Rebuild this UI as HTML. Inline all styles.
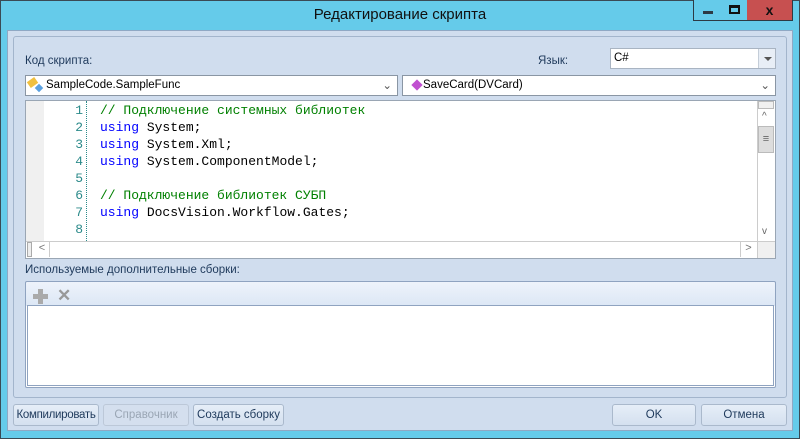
<!DOCTYPE html>
<html><head><meta charset="utf-8"><style>
*{box-sizing:border-box;margin:0;padding:0}
body{width:800px;height:439px;position:relative;overflow:hidden;background:#65cbea;font-family:"Liberation Sans",sans-serif;font-size:11.5px;color:#1e395b}
.a{position:absolute}
.win{left:0;top:0;width:800px;height:439px;border:1px solid #3a4a55;}
.client{left:7px;top:30px;width:786px;height:401px;background:#d0ddee;border:1px solid #8fa8c4}
.panel{left:13px;top:36px;width:774px;height:362px;border:1px solid #a3b5cc;border-radius:3px}
.box{background:#fff;border:1px solid #a9b4c2}
.btn{border:1px solid #aab9cc;border-radius:3px;background:linear-gradient(#e6eef8,#d4e0ef);text-align:center;line-height:20px;color:#1e395b;font-size:11.5px;white-space:nowrap}
.code{font-family:"Liberation Mono",monospace;font-size:13px;line-height:17px;white-space:pre;color:#000}
.k{color:#0000ff}.c{color:#008000}
.ln{font-family:"Liberation Mono",monospace;font-size:13px;line-height:17px;color:#2b8a8a;text-align:right;white-space:pre}
</style></head><body>
<div class="a win"></div>
<div class="a" style="left:0;top:6px;width:800px;text-align:center;font-size:15px;color:#111">Редактирование скрипта</div>
<div class="a" style="left:693px;top:0;width:30px;height:21px;border:1px solid #2d3a44;border-top:none;background:#65cbea"><div class="a" style="left:9px;top:11px;width:10px;height:3px;background:#2d3a44"></div></div>
<div class="a" style="left:722px;top:0;width:26px;height:21px;border:1px solid #2d3a44;border-top:none;border-left:none;background:#65cbea"><div class="a" style="left:7px;top:5px;width:11px;height:9px;border:2px solid #111;border-top-width:3px"></div></div>
<div class="a" style="left:747px;top:0;width:46px;height:21px;border:1px solid #2d3a44;border-top:none;border-left:none;background:#c75050;color:#111;font-weight:bold;font-size:14px;text-align:center;line-height:20px">x</div>
<div class="a client"></div>
<div class="a panel"></div>
<div class="a" style="left:25px;top:55px">Код скрипта:</div>
<div class="a" style="left:538px;top:55px">Язык:</div>
<div class="a box" style="left:610px;top:48px;width:166px;height:21px;padding:3px 3px;color:#000">C#</div>
<div class="a" style="left:758px;top:49px;width:17px;height:19px;background:#e8eef6;border-left:1px solid #c4cdd8"><div class="a" style="left:5px;top:8px;border:4px solid transparent;border-top:4px solid #555;border-bottom:none"></div></div>
<div class="a box" style="left:25px;top:75px;width:373px;height:21px;border-color:#8a96a4;padding:3px 0 0 20px;color:#000">SampleCode.SampleFunc<span class="a" style="right:5px;top:2px;color:#555">⌄</span></div>
<div class="a" style="left:28px;top:79px;width:9px;height:7px;background:#f0c040;transform:rotate(-35deg)"></div>
<div class="a" style="left:36px;top:85px;width:6px;height:6px;background:#5aa0e0;transform:rotate(45deg)"></div>
<div class="a box" style="left:402px;top:75px;width:374px;height:21px;border-color:#8a96a4;padding:3px 0 0 20px;color:#000">SaveCard(DVCard)<span class="a" style="right:5px;top:2px;color:#555">⌄</span></div>
<div class="a" style="left:413px;top:81px;width:8px;height:8px;background:#c050d0;transform:rotate(45deg)"></div>
<div class="a box" style="left:25px;top:100px;width:751px;height:159px;border-color:#9aa6b4"></div>
<div class="a" style="left:26px;top:101px;width:18px;height:140px;background:#f0f0f0"></div>
<div class="a ln" style="left:44px;top:102px;width:39px">1
2
3
4
5
6
7
8</div>
<div class="a" style="left:86px;top:101px;height:140px;border-left:1px dotted #2b8a8a"></div>
<div class="a code" style="left:100px;top:102px"><span class="c">// Подключение системных библиотек</span>
<span class="k">using</span> System;
<span class="k">using</span> System.Xml;
<span class="k">using</span> System.ComponentModel;

<span class="c">// Подключение библиотек СУБП</span>
<span class="k">using</span> DocsVision.Workflow.Gates;
</div>
<div class="a" style="left:757px;top:101px;width:18px;height:140px;background:#fff;border-left:1px solid #ccc"></div>
<div class="a" style="left:758px;top:101px;width:16px;height:8px;background:#f0f0f0;border:1px solid #bbb"></div>
<div class="a" style="left:762px;top:111px;font-size:10px;color:#666">^</div>
<div class="a" style="left:758px;top:126px;width:16px;height:27px;background:#ddd;border:1px solid #bbb;text-align:center;color:#666;font-size:11px;line-height:24px">≡</div>
<div class="a" style="left:762px;top:226px;font-size:10px;color:#666">v</div>
<div class="a" style="left:26px;top:241px;width:731px;height:17px;background:#fff;border-top:1px solid #ccc"></div>
<div class="a" style="left:27px;top:242px;width:5px;height:15px;background:#eee;border:1px solid #aaa"></div>
<div class="a" style="left:35px;top:242px;width:15px;height:15px;border-right:1px solid #ccc;color:#777;font-size:11px;text-align:center">&lt;</div>
<div class="a" style="left:740px;top:242px;width:16px;height:15px;border-left:1px solid #ccc;color:#777;font-size:11px;text-align:center">&gt;</div>
<div class="a" style="left:757px;top:241px;width:18px;height:17px;background:#f0f0f0;border-left:1px solid #ccc;border-top:1px solid #ccc"></div>
<div class="a" style="left:25px;top:264px">Используемые дополнительные сборки:</div>
<div class="a" style="left:25px;top:281px;width:751px;height:107px;border:1px solid #8fa3c0;border-radius:2px;background:linear-gradient(#eef3fb,#dce7f5 24px,#fff 24px)"></div>
<div class="a" style="left:27px;top:305px;width:747px;height:81px;background:#fff;border:1px solid #8fa3c0"></div>
<div class="a" style="left:33px;top:294px;width:15px;height:5px;background:#aaa"></div>
<div class="a" style="left:38px;top:289px;width:5px;height:15px;background:#aaa"></div>
<div class="a" style="left:57px;top:286px;font-size:17px;font-weight:bold;color:#999">✕</div>
<div class="a btn" style="left:13px;top:404px;width:86px;height:22px;letter-spacing:-0.3px">Компилировать</div>
<div class="a btn" style="left:103px;top:404px;width:86px;height:22px;color:#9aa6b4;background:#d4dfee;border-color:#bcc8d8">Справочник</div>
<div class="a btn" style="left:193px;top:404px;width:91px;height:22px">Создать сборку</div>
<div class="a btn" style="left:612px;top:404px;width:84px;height:22px">OK</div>
<div class="a btn" style="left:701px;top:404px;width:86px;height:22px">Отмена</div>
</body></html>
